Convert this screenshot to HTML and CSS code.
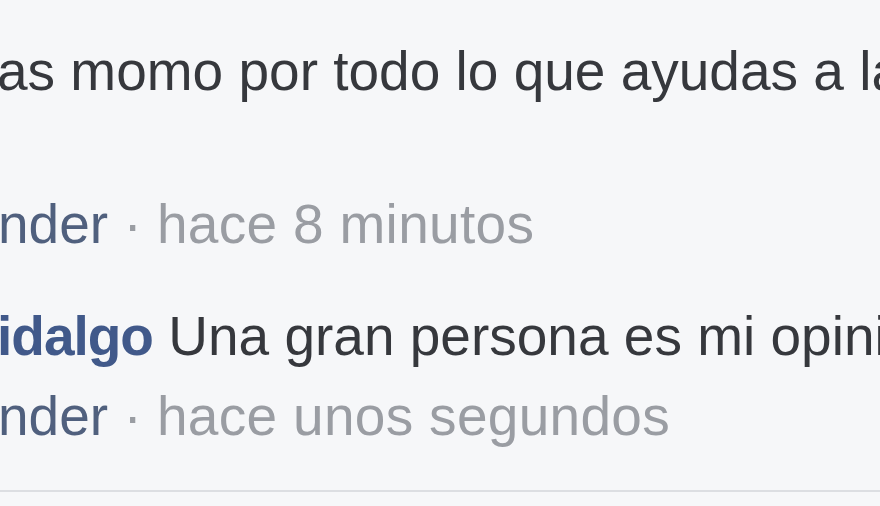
FILE: index.html
```html
<!DOCTYPE html>
<html lang="es">
<head>
  <meta charset="UTF-8">
  <title>Comentarios</title>
  <link rel="stylesheet" href="styles.css">
</head>
<body>
  <div class="thread">
    <div class="comment">
      <div class="comment-text first">as momo por todo lo que ayudas a la comunidad</div>
      <div class="meta spaced"><a class="reply">nder</a> <span class="dot">·</span> <span class="time">hace 8 minutos</span></div>
    </div>

    <div class="comment">
      <div class="comment-text"><a class="author">idalgo</a> Una gran persona es mi opinión</div>
      <div class="meta"><a class="reply">nder</a> <span class="dot">·</span> <span class="time">hace unos segundos</span></div>
    </div>
  </div>
  <div class="divider"></div>
</body>
</html>
```

FILE: styles.css
```css
body {
  margin: 0;
  background: #f6f7f9;
  font-family: 'Liberation Sans', Arial, sans-serif;
  overflow: hidden;
}

.thread {
  padding-top: 36px;
  overflow: hidden;
  white-space: nowrap;
}

.comment-text,
.meta {
  font-size: 55px;
  line-height: 70px;
  height: 70px;
}

.comment-text {
  color: #36383d;
  margin-left: -3px;
}

.comment + .comment {
  margin-top: 42px;
}

.meta {
  margin-top: 10px;
  margin-left: -2px;
}

.meta.spaced {
  margin-top: 83px;
}

.author {
  color: #41598a;
  font-weight: bold;
  letter-spacing: -1px;
}

.reply {
  color: #50607e;
}

.dot,
.time {
  color: #9a9da3;
}

.time {
  letter-spacing: 0.3px;
}

.divider {
  margin-top: 39px;
  height: 2px;
  background: #dcdee2;
}
```
